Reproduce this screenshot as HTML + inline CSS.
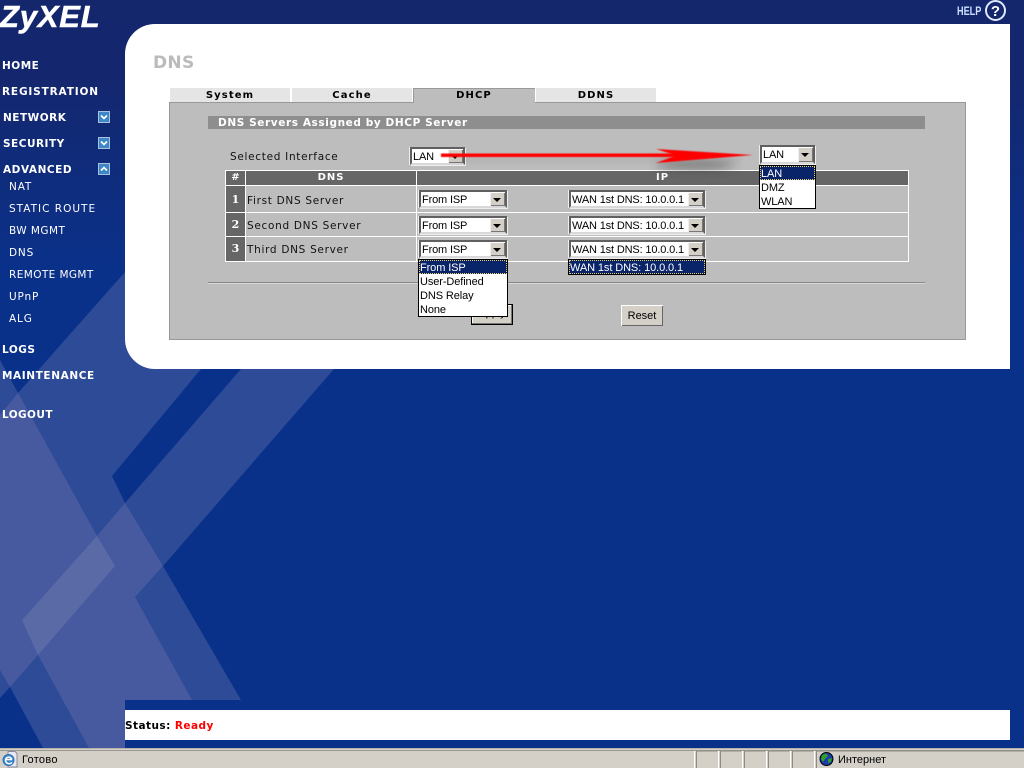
<!DOCTYPE html>
<html><head><meta charset="utf-8"><title>DNS</title>
<style>
html,body{margin:0;padding:0}
body{width:1024px;height:768px;overflow:hidden;position:relative;background:#0a318a;font-family:"DejaVu Sans","Liberation Sans",sans-serif}
div{position:absolute}
.t{position:absolute;white-space:nowrap;line-height:12px}
.nb{font:bold 10.5px/12px "DejaVu Sans",sans-serif;color:#fff;letter-spacing:.5px;left:2px}
.ns{font:10.5px/12px "DejaVu Sans",sans-serif;color:#fff;letter-spacing:.85px;left:9px}
.tab{top:88px;height:14px;background:#e5e5e5;text-align:center;font:bold 10px/15px "DejaVu Sans",sans-serif;letter-spacing:1.1px;color:#000}
.lab{font:10.5px/12px "DejaVu Sans",sans-serif;color:#111;letter-spacing:.7px}
.num{left:226px;width:19px;background:#666;color:#fff;text-align:center;font:bold 11px/24px "DejaVu Serif","Liberation Serif",serif}
.wl{background:#fff}
.sel{box-sizing:border-box;background:#fff;border:2px solid;border-color:#606060 #606060 #d8d8d8 #606060;box-shadow:1px 1px 0 #eee,-1px 0 0 #eee;font:11px/16px "Liberation Sans",sans-serif;letter-spacing:-.15px;color:#000;white-space:nowrap;padding-left:1px}
.sel i{position:absolute;right:0;top:0;bottom:0;width:15px;background:#d4d0c8;border-left:1px solid #eee;border-top:1px solid #fff;box-sizing:border-box;box-shadow:inset -1px -1px 0 #777}
.sel i:after{content:"";position:absolute;left:2px;top:5px;border:4px solid transparent;border-top:4px solid #000;border-bottom:0}
.list{background:#fff;border:1px solid #000;box-sizing:border-box;font:11px/16px "Liberation Sans",sans-serif;letter-spacing:-.1px;color:#000;white-space:nowrap}
.list p{margin:0;height:14px;padding-left:1px}
.list p.h{background:#0a246a;color:#fff;outline:1px dotted #e8d070;outline-offset:-1px}
.btn{box-sizing:border-box;background:#d4d0c8;text-align:center;font:11px/17px "Liberation Sans",sans-serif;color:#000}
</style></head><body>

<svg style="position:absolute;left:0;top:0" width="1024" height="768">
<defs><linearGradient id="g" x1="0" y1="0" x2="0" y2="1"><stop offset="0" stop-color="#14266c"/><stop offset=".1" stop-color="#14276e"/><stop offset=".35" stop-color="#0a318a"/><stop offset="1" stop-color="#0a318a"/></linearGradient>
<filter id="b" x="-50%" y="-200%" width="200%" height="500%"><feGaussianBlur stdDeviation="5"/></filter>
<filter id="b2" x="-20%" y="-400%" width="140%" height="900%"><feGaussianBlur stdDeviation="3"/></filter>
<filter id="b3" x="-5%" y="-100%" width="110%" height="300%"><feGaussianBlur stdDeviation=".5"/></filter>
</defs>
<rect width="1024" height="768" fill="url(#g)"/>
<polygon fill="#2d4b96" points="334,369 163,566 241,700 125,700 125,748 43,748 10,687 0,698 0,360 18,393 125,272 334,272"/>
<polygon fill="#0a318a" points="201,369 112,476 125,503 241,369"/>
<polygon fill="#475a9f" points="18,393 0,415 0,670 10,687 38,655 89,748 125,748 125,700 192,700 135,597 163,566 125,503 97,536 22,400"/>
<polygon fill="#5a6aa6" points="97,536 115,566 38,655 22,620"/>
</svg>

<!-- main panel -->
<div style="left:125px;top:24px;width:885px;height:345px;background:#fff;border-radius:30px 0 0 30px"></div>
<div class="t" style="left:153px;top:55px;font:bold 17px/17px 'DejaVu Sans',sans-serif;color:#bbb;letter-spacing:.3px">DNS</div>

<!-- logo + help -->
<div class="t" style="left:0;top:-1px;font:italic bold 31px/36px 'Liberation Sans',sans-serif;color:#fff;letter-spacing:.8px;-webkit-text-stroke:.5px #fff">ZyXEL</div>
<div class="t" style="left:957px;top:5px;font:bold 12px/13px 'Liberation Sans',sans-serif;color:#cfe0ff;transform:scaleX(.76);transform-origin:0 0">HELP</div>
<svg style="position:absolute;left:984px;top:0" width="23" height="22"><circle cx="11.500" cy="10.500" r="9.500" fill="#14266c" stroke="#dfeaff" stroke-width="2"/><text x="11.500" y="16" font-family="Liberation Sans" font-weight="bold" font-size="15" fill="#fff" text-anchor="middle">?</text></svg>

<!-- nav -->
<div class="t nb" style="top:60px">HOME</div>
<div class="t nb" style="top:86px;letter-spacing:.85px">REGISTRATION</div>
<div class="t nb" style="top:112px;left:3px">NETWORK</div>
<div class="t nb" style="top:138px;left:3px">SECURITY</div>
<div class="t nb" style="top:164px;left:3px;letter-spacing:.55px">ADVANCED</div>
<div class="t ns" style="top:181px">NAT</div>
<div class="t ns" style="top:203px;letter-spacing:1px">STATIC ROUTE</div>
<div class="t ns" style="top:225px;letter-spacing:.45px">BW MGMT</div>
<div class="t ns" style="top:247px">DNS</div>
<div class="t ns" style="top:269px;letter-spacing:.4px">REMOTE MGMT</div>
<div class="t ns" style="top:291px">UPnP</div>
<div class="t ns" style="top:313px">ALG</div>
<div class="t nb" style="top:344px">LOGS</div>
<div class="t nb" style="top:370px;letter-spacing:.6px">MAINTENANCE</div>
<div class="t nb" style="top:409px;letter-spacing:.4px">LOGOUT</div>
<svg style="position:absolute;left:98px;top:111px" width="12" height="12"><rect x=".5" y=".5" width="11" height="11" fill="#3d86c8" stroke="#a8c0d8"/><path d="M3 4.500L6 7.500L9 4.500" fill="none" stroke="#fff" stroke-width="1.600"/></svg>
<svg style="position:absolute;left:98px;top:137px" width="12" height="12"><rect x=".5" y=".5" width="11" height="11" fill="#3d86c8" stroke="#a8c0d8"/><path d="M3 4.500L6 7.500L9 4.500" fill="none" stroke="#fff" stroke-width="1.600"/></svg>
<svg style="position:absolute;left:98px;top:163px" width="12" height="12"><rect x=".5" y=".5" width="11" height="11" fill="#3d86c8" stroke="#a8c0d8"/><path d="M3 7.500L6 4.500L9 7.500" fill="none" stroke="#fff" stroke-width="1.600"/></svg>

<!-- tabs -->
<div class="tab" style="left:170px;width:120px">System</div>
<div class="tab" style="left:292px;width:120px">Cache</div>
<div class="tab" style="left:413px;width:122px;background:#bdbdbd;box-shadow:inset 1px 1px 0 #999">DHCP</div>
<div class="tab" style="left:536px;width:120px">DDNS</div>

<!-- gray box -->
<div style="left:169px;top:102px;width:797px;height:238px;box-sizing:border-box;background:#bdbdbd;border:1px solid #999"></div>
<div style="left:414px;top:101px;width:121px;height:2px;background:#bdbdbd"></div>
<div style="left:208px;top:116px;width:717px;height:13px;background:#8e8e8e"></div>
<div class="t" style="left:218px;top:117px;font:bold 10.5px/13px 'DejaVu Sans',sans-serif;color:#fff;letter-spacing:.6px">DNS Servers Assigned by DHCP Server</div>
<div class="t lab" style="left:230px;top:151px">Selected Interface</div>

<!-- table -->
<div class="wl" style="left:225px;top:170px;width:684px;height:92px"></div>
<div style="left:226px;top:171px;width:19px;height:14px;background:#666"></div>
<div style="left:246px;top:171px;width:170px;height:14px;background:#666"></div>
<div style="left:417px;top:171px;width:491px;height:14px;background:#666"></div>
<div class="t" style="left:226px;width:19px;text-align:center;top:172px;font:bold 10px/12px 'DejaVu Sans',sans-serif;color:#fff">#</div>
<div class="t" style="left:246px;width:170px;text-align:center;top:172px;font:bold 10px/12px 'DejaVu Sans',sans-serif;color:#fff;letter-spacing:1px">DNS</div>
<div class="t" style="left:417px;width:491px;text-align:center;top:172px;font:bold 10px/12px 'DejaVu Sans',sans-serif;color:#fff;letter-spacing:1px">IP</div>
<div class="num" style="top:186px;height:26px;line-height:27px">1</div>
<div class="num" style="top:213px;height:23px">2</div>
<div class="num" style="top:237px;height:24px">3</div>
<div style="left:246px;top:186px;width:170px;height:26px;background:#bdbdbd"></div>
<div style="left:417px;top:186px;width:491px;height:26px;background:#bdbdbd"></div>
<div style="left:246px;top:213px;width:170px;height:23px;background:#bdbdbd"></div>
<div style="left:417px;top:213px;width:491px;height:23px;background:#bdbdbd"></div>
<div style="left:246px;top:237px;width:170px;height:24px;background:#bdbdbd"></div>
<div style="left:417px;top:237px;width:491px;height:24px;background:#bdbdbd"></div>
<div class="t lab" style="left:247px;top:195px">First DNS Server</div>
<div class="t lab" style="left:247px;top:220px">Second DNS Server</div>
<div class="t lab" style="left:247px;top:244px">Third DNS Server</div>

<!-- hr -->
<div style="left:208px;top:282px;width:717px;height:1px;background:#888"></div>
<div style="left:208px;top:283px;width:717px;height:1px;background:#d8d8d8"></div>

<!-- buttons -->
<div class="btn" style="left:471px;top:304px;width:42px;height:21px;border:1px solid #000;box-shadow:inset -1px -1px 0 #777,inset 1px 1px 0 #fff">Apply</div>
<div class="btn" style="left:621px;top:305px;width:42px;height:21px;padding-top:3px;box-shadow:inset 1px 1px 0 #fff,inset -1px -1px 0 #666">Reset</div>

<!-- selects -->
<div class="sel" style="left:410px;top:147px;width:55px;height:18px">LAN<i></i></div>
<div class="sel" style="left:760px;top:145px;width:55px;height:19px">LAN<i></i></div>
<div class="sel" style="left:419px;top:190px;width:88px;height:18px">From ISP<i></i></div>
<div class="sel" style="left:419px;top:216px;width:88px;height:18px">From ISP<i></i></div>
<div class="sel" style="left:419px;top:240px;width:88px;height:18px">From ISP<i></i></div>
<div class="sel" style="left:569px;top:190px;width:136px;height:18px">WAN 1st DNS: 10.0.0.1<i></i></div>
<div class="sel" style="left:569px;top:216px;width:136px;height:18px">WAN 1st DNS: 10.0.0.1<i></i></div>
<div class="sel" style="left:569px;top:240px;width:136px;height:18px">WAN 1st DNS: 10.0.0.1<i></i></div>

<div class="list" style="left:759px;top:165px;width:57px;height:44px"><p class="h">LAN</p><p>DMZ</p><p>WLAN</p></div>
<div class="list" style="left:418px;top:259px;width:90px;height:58px"><p class="h">From ISP</p><p>User-Defined</p><p>DNS Relay</p><p>None</p></div>
<div class="list" style="left:568px;top:259px;width:138px;height:16px"><p class="h">WAN 1st DNS: 10.0.0.1</p></div>

<!-- arrow -->
<svg style="position:absolute;left:430px;top:135px" width="340" height="45">
<rect x="20" y="24" width="290" height="3" fill="#555" opacity=".16" filter="url(#b2)"/>
<ellipse cx="265" cy="30" rx="40" ry="4" fill="#333" opacity=".55" filter="url(#b)"/>
<rect x="11" y="18.500" width="240" height="3.500" fill="#f00" filter="url(#b3)"/>
<polygon points="226,14 323,20 226,28 246,20.500" fill="#f00" filter="url(#b3)"/>
</svg>

<!-- status -->
<div style="left:125px;top:710px;width:885px;height:30px;background:#fff"></div>
<div class="t" style="left:125px;top:720px;font:bold 10.5px/12px 'DejaVu Sans',sans-serif;color:#000;letter-spacing:.45px">Status: <span style="color:#f00">Ready</span></div>

<!-- browser status bar -->
<div style="left:0;top:748px;width:1024px;height:20px;background:#d4d0c8"></div>
<div style="left:0;top:748px;width:1024px;height:1px;background:#b5b2ab"></div>
<div style="left:0;top:750px;width:1024px;height:1px;background:#9a9790"></div>
<div class="t" style="left:22px;top:754px;font:11px/13px 'Liberation Sans',sans-serif;color:#000;letter-spacing:.3px">Готово</div>
<div class="t" style="left:838px;top:754px;font:11px/13px 'Liberation Sans',sans-serif;color:#000">Интернет</div>
<svg style="position:absolute;left:0;top:748px" width="1024" height="20">
<g fill="none" stroke="#8c8a84"><path d="M696.500 20V3H717.500"/><path d="M720.500 20V3H741.500"/><path d="M744.500 20V3H765.500"/><path d="M768.500 20V3H789.500"/><path d="M792.500 20V3H813.500"/><path d="M816.500 20V3H1024"/></g>
<g stroke="#fff"><path d="M694.500 3V20M718.500 3V20M742.500 3V20M766.500 3V20M790.500 3V20M814.500 3V20"/></g>
<path d="M8 3.500H15L17 5.500V19H8Z" fill="#e8e8f0" stroke="#8a8aa0"/>
<circle cx="8.500" cy="12" r="5.500" fill="#3a8ad0" stroke="#3070b0"/>
<path d="M5 11.500H12M12 14.500C10 16.500 6 16 5.500 12.500C5.500 9 10 7.500 12 11.500" fill="none" stroke="#fff" stroke-width="1.500"/>
<circle cx="826.500" cy="11" r="6.500" fill="#1c3aa8" stroke="#000"/>
<path d="M822 7L826 5.500L828 8L825 11L823 14L821 11ZM828 11L832 10L831 14L828 15Z" fill="#2ca02c"/>
</svg>
</body></html>
